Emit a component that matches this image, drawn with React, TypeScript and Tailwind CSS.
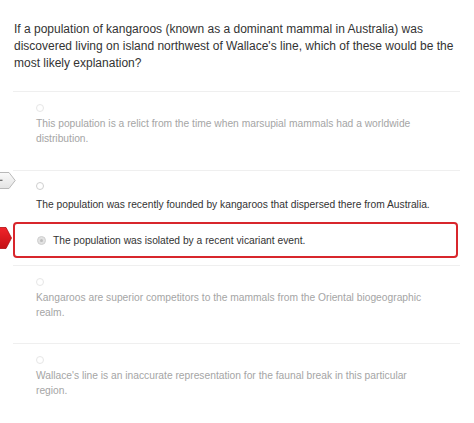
import React from "react";

function Radio({ variant }: { variant: "faint" | "normal" | "checked" }) {
  if (variant === "checked") {
    return (
      <span className="flex h-[9px] w-[9px] items-center justify-center rounded-full border border-[#cfcfcf] bg-[#e2e2e2]">
        <span className="h-[3px] w-[3px] rounded-full bg-[#bdbdbd]" />
      </span>
    );
  }
  return (
    <span
      className={
        variant === "faint"
          ? "block h-[8px] w-[8px] rounded-full border border-[#e6e6e6] bg-white"
          : "block h-[8px] w-[8px] rounded-full border border-[#cfcfcf] bg-white"
      }
    />
  );
}

export default function App() {
  const font = { fontFamily: '"Liberation Sans", Arial, Helvetica, sans-serif' };
  return (
    <div className="relative min-h-[423px] w-[474px] bg-white" style={font}>
      {/* markers */}
      <svg className="absolute left-0 top-[172px]" width="16" height="17" viewBox="0 0 16 17">
        <defs>
          <linearGradient id="g1" x1="0" y1="0" x2="0" y2="1">
            <stop offset="0" stopColor="#fafafa" />
            <stop offset="1" stopColor="#e4e4e4" />
          </linearGradient>
        </defs>
        <path d="M-2 0.5 H9 L15.2 8.5 L9 16.5 H-2 Z" fill="url(#g1)" stroke="#b9b9b9" strokeWidth="1" strokeLinejoin="round" />
        <rect x="0" y="7.7" width="2.5" height="1.2" fill="#666" />
      </svg>
      <svg className="absolute left-0 top-[227px]" width="12" height="22" viewBox="0 0 12 22">
        <defs>
          <linearGradient id="g2" x1="0" y1="0" x2="0" y2="1">
            <stop offset="0" stopColor="#f0242a" />
            <stop offset="1" stopColor="#c40f14" />
          </linearGradient>
        </defs>
        <path d="M-2 0.5 H6 L11.5 11 L6 21.5 H-2 Z" fill="url(#g2)" stroke="#b00c10" strokeWidth="0.8" strokeLinejoin="round" />
      </svg>

      <div className="pl-[13px] pr-[14px]">
        <p className="pl-[1px] pt-[21px] text-[12px] leading-[17px] text-[#333333]">
          If a population of kangaroos (known as a dominant mammal in Australia) was discovered living on island
          northwest of Wallace's line, which of these would be the most likely explanation?
        </p>

        <div className="mt-[19px]">
          {/* option 1 */}
          <div className="border-t border-[#efefef] pl-[23px] pr-[22px] pb-[24px] pt-[12px]">
            <Radio variant="faint" />
            <p className="mt-[4px] text-[10.25px] leading-[15px] text-[#a5a5a5]">
              This population is a relict from the time when marsupial mammals had a worldwide distribution.
            </p>
          </div>

          {/* option 2 */}
          <div className="border-t border-[#efefef] pl-[23px] pr-[22px] pb-[10px] pt-[11px]">
            <Radio variant="normal" />
            <p className="mt-[7px] text-[10.25px] leading-[15px] text-[#333333]">
              The population was recently founded by kangaroos that dispersed there from Australia.
            </p>
          </div>

          {/* option 3 selected */}
          <div className="mr-[2px] flex h-[36px] items-center gap-[7.5px] rounded-[4px] border-2 border-[#d8262c] pl-[21.5px]">
            <Radio variant="checked" />
            <p className="text-[10.25px] leading-[15px] text-[#333333]">
              The population was isolated by a recent vicariant event.
            </p>
          </div>

          {/* option 4 */}
          <div className="mt-[7px] border-t border-[#efefef] pl-[23px] pr-[22px] pb-[23px] pt-[12px]">
            <Radio variant="faint" />
            <p className="mt-[4px] text-[10.25px] leading-[15px] text-[#a5a5a5]">
              Kangaroos are superior competitors to the mammals from the Oriental biogeographic realm.
            </p>
          </div>

          {/* option 5 */}
          <div className="border-t border-[#efefef] pl-[23px] pr-[22px] pb-[24px] pt-[12px]">
            <Radio variant="faint" />
            <p className="mt-[4px] text-[10.25px] leading-[15px] text-[#a5a5a5]">
              Wallace's line is an inaccurate representation for the faunal break in this particular region.
            </p>
          </div>
        </div>
      </div>
    </div>
  );
}
